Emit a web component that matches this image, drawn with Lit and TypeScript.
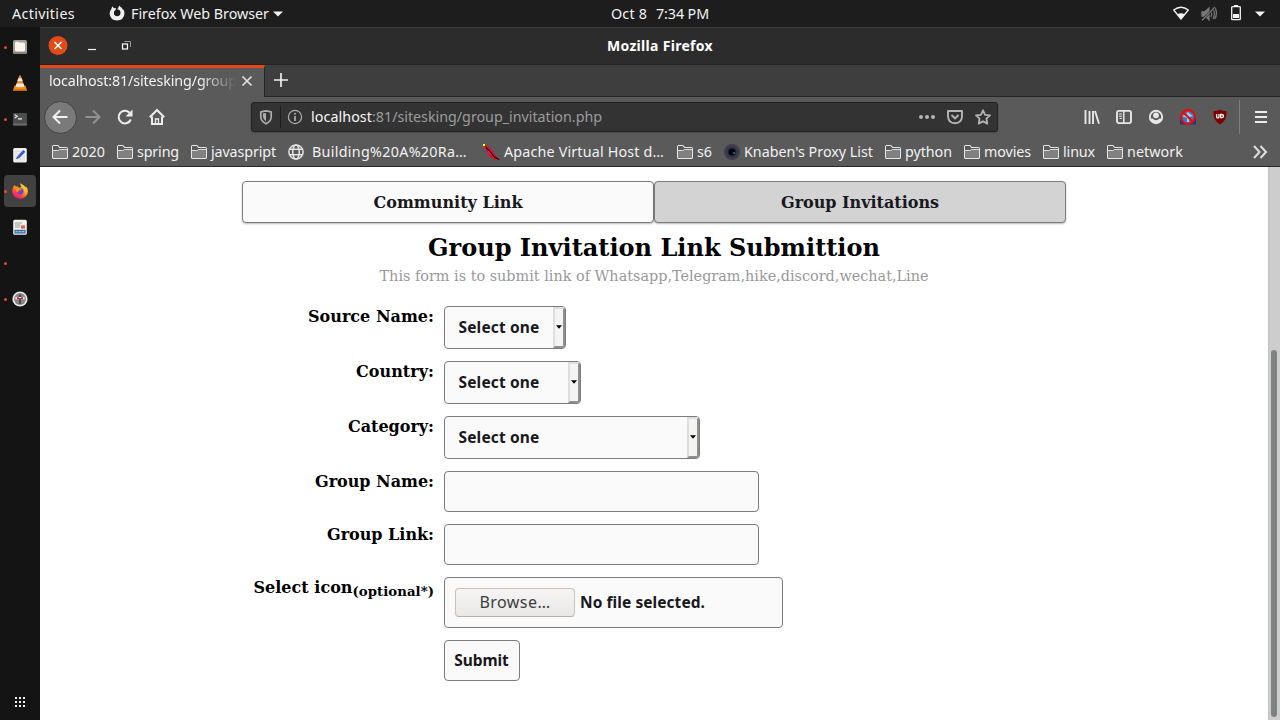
import { LitElement, html, css, svg, nothing } from "lit";
import { customElement, property } from "lit/decorators.js";

/** A single line of text whose tracking is adjusted so that it spans a given width. */
@customElement("fit-text")
class FitText extends LitElement {
  @property({ type: Number }) w = 0;
  @property() text = "";
  static styles = css`
    :host { display: inline-block; white-space: pre; flex: none; }
    span { display: inline-block; white-space: pre; }
  `;
  updated() {
    const el = this.renderRoot.querySelector("span") as HTMLElement;
    el.style.letterSpacing = "0px";
    const natural = el.getBoundingClientRect().width;
    const n = this.text.length;
    el.style.letterSpacing = `${(this.w - natural) / n}px`;
    this.style.width = `${this.w}px`;
  }
  render() {
    return html`<span>${this.text}</span>`;
  }
}

const fit = (text: string, w: number, cls = "") => html`<fit-text class=${cls} .text=${text} .w=${w}></fit-text>`;
const icon = (body: unknown, size = 16, cls = "") =>
  html`<svg class="ic ${cls}" width=${size} height=${size} viewBox="0 0 ${size} ${size}">${body}</svg>`;

const folder = svg`<path d="M.5 14V2.500q0-1 1-1h4.300q.5 0 .7.500l.8 1.500h7.200q1 0 1 1V14q0 .5-.5.500H1Q.5 14.500.5 14z" fill="#808080" stroke="#e6e6e6"/><path d="M1 2h5l.8 1.500H15v1.800H7L6 6H1z" fill="#5a5a5a"/><path d="M1 6.500h4.500q1 0 1.500-.5t1-.5h7" fill="none" stroke="#e6e6e6" stroke-width=".9"/><path d="M.5 4V2.500q0-1 1-1h4.300q.5 0 .7.500l.8 1.500h7.200q1 0 1 1" fill="none" stroke="#e6e6e6"/>`;
const globe = svg`<g fill="none" stroke="#e4e4e4" stroke-width="1.500"><circle cx="8" cy="8" r="7.100"/><ellipse cx="8" cy="8" rx="3.300" ry="7.100"/><path d="M1.500 5.300h13M1.500 10.700h13"/></g>`;
const feather = svg`<path d="M1 1q4.500 1 7 4t4.500 7l3.500 3-2.500 1Q8 14 5.500 10.500 3.500 7.500 1 1z" fill="#f00"/><path d="M3.500 4q4 1.500 8 8-4-.5-6-3.500z" fill="#d818e0"/><path d="M3 3.500L7 7.500l4.500 5.500 4.500 2.500" fill="none" stroke="#100018" stroke-width="1.200"/><path d="M0 0h2v2H0z" fill="#ff0"/>`;
const eye = svg`<circle cx="8" cy="8" r="8" fill="#3f3e4b"/><circle cx="8" cy="8" r="5.600" fill="#343345"/><circle cx="8" cy="8" r="3.600" fill="#02021c"/><circle cx="10" cy="9" r="1.100" fill="#128a5c"/>`;

const BOOKMARKS: [unknown, string, number, number, number][] = [
  [folder, "2020", 33, 4, 12], [folder, "spring", 42, 4, 12], [folder, "javaspript", 65, 4, 12],
  [globe, "Building%20A%20Ra…", 155, 8, 16], [feather, "Apache Virtual Host d…", 160, 5, 13],
  [folder, "s6", 15, 4, 12], [eye, "Knaben's Proxy List", 129, 4, 12], [folder, "python", 47, 4, 12],
  [folder, "movies", 47, 4, 12], [folder, "linux", 32, 4, 12], [folder, "network", 56, 4, 0],
];

const DOCK: { art: unknown; dot?: boolean; active?: boolean }[] = [
  { dot: true, art: svg`<rect x="1" y="1" width="14" height="14" rx="1.800" fill="#aaa192"/><path d="M1 13h14v.5q0 1.500-1.500 1.500h-11Q1 15 1 13.500z" fill="#8b8375"/><path d="M3 4q0-1.200 1.200-1.200h2.300l1 .8h4.300Q13 3.600 13 4.800v6.500q0 1.200-1.200 1.200H4.200Q3 12.500 3 11.300z" fill="#f6f5f2"/>` },
  { art: svg`<path d="M2.500 10.500h11L15 15.500H1z" fill="#f28a0a"/><path d="M1 14.500h14v1.200H1z" fill="#d96c00"/><path d="M7.200.5h1.600L12.500 12q-4.500 2.300-9 0z" fill="#f58410"/><path d="M6.300 3.200h3.400l1 3H5.300z" fill="#e8e8e8"/><path d="M4.500 8.600h7l.9 2.800q-4.400 1.800-8.800 0z" fill="#ececec"/>` },
  { dot: true, art: svg`<rect x="1" y="2" width="14" height="12.500" rx="1" fill="#4b4c4c"/><path d="M1 12.500h14v1q0 1-1 1H2q-1 0-1-1z" fill="#6a6a6a"/><path d="M2.700 3.700l2.500 1.600-2.500 1.600M6 7.800h4" fill="none" stroke="#f2f2f2" stroke-width="1.200"/>` },
  { art: svg`<rect x="1.200" y="1" width="13.600" height="14.500" rx="1.500" fill="#eeeeed"/><path d="M3 4.500h10M3 7h10M3 9.500h10M3 12h10" stroke="#d2d2d2" stroke-width=".7"/><path d="M5.300 9.500l6-6.500 2 1.800-6 6.300z" fill="#2b57d8"/><path d="M5.300 9.500l2 1.600-3.300 1z" fill="#153aa8"/>` },
  { dot: true, active: true, art: svg`<defs><linearGradient id="fx" x1=".85" y1=".05" x2=".25" y2=".95"><stop offset="0" stop-color="#ffe84a"/><stop offset=".4" stop-color="#ffae1e"/><stop offset=".7" stop-color="#ff4b38"/><stop offset="1" stop-color="#e31587"/></linearGradient></defs><path d="M8.500 0q-.8 2.200 1 3.500L8 5 5.500 4.500 5.800 3 4 3.700 2.500 2Q.2 5 .1 8.300A7.900 7.700 0 0 0 15.900 8Q16 5 13.600 3.200l.2 1.600Q12.600 2.500 11 2 9 1.200 8.500 0z" fill="url(#fx)"/><circle cx="8.200" cy="8.300" r="3.400" fill="#7542c8"/><path d="M3 4.500q2.500-1.200 4.800.6L9.500 6Q9 7.500 7.300 7.500 6 8 6.300 9.300 5 9.500 4 8z" fill="#ff8a16"/>` },
  { art: svg`<rect x="1.200" y=".7" width="13.600" height="15" rx="1.500" fill="#f0f0ef"/><path d="M3 4h7M3 6h5.500M3 8h5" stroke="#9c9c94"/><rect x="9" y="6.400" width="4" height="3.200" fill="#e5604a"/><rect x="2.400" y="10.800" width="11.200" height="3.800" fill="#3c6da4"/><path d="M3.500 12.700h2m1 0h2.300m1 0h2.500" stroke="#c8dcf0" stroke-width="1.100"/>` },
  { dot: true, art: nothing },
  { dot: true, art: svg`<circle cx="8" cy="8" r="7.600" fill="#e9e9e9"/><circle cx="8" cy="8" r="5.900" fill="#858585"/><path d="M8 3.500V13" stroke="#4d4d4d" stroke-width="2"/><path d="M3.500 7.200h9" stroke="#f3eaea" stroke-width="2.400"/><path d="M5 7.200h2m2 0h2" stroke="#e8102c" stroke-width="1.900"/><circle cx="8" cy="8" r="1" fill="#333"/>` },
];

@customElement("app-root")
class AppRoot extends LitElement {
  static styles = css`
    :host { display: flex; flex-direction: column; width: 1280px; height: 720px; overflow: hidden; background: #fff;
      font: 14.3px/20px "Noto Sans", sans-serif; color: #f2f2f2; }
    * { box-sizing: border-box; }
    .ic { display: block; flex: none; overflow: visible; }
    .row { display: flex; align-items: center; }
    .top { height: 27px; flex: none; background: #1d1d1d; padding: 0 14px 0 12px; }
    .side { width: 599px; flex: none; }
    .fx { margin: 0 6px 0 34px; }
    .caret { margin-left: 4px; }
    .clock { gap: 9px; }
    .tray { justify-content: flex-end; margin-left: auto; width: auto; padding-right: 1px; }
    .body { flex: 1; display: flex; min-height: 0; }
    .dock { width: 40px; flex: none; background: #141414; display: flex; flex-direction: column; padding: 4px 4px 13px; }
    .app { height: 32px; margin-bottom: 4px; display: flex; align-items: center; border-radius: 4px; }
    .app.on { background: #414141; }
    .app .ic { margin-left: 6px; }
    .dot { width: 3px; height: 3px; border-radius: 50%; background: #e2501f; margin-right: -1px; }
    .dot.off { background: none; }
    .grid { margin-top: auto; display: grid; grid-template-columns: repeat(3, 2px); gap: 2px; padding-left: 11px; }
    .grid i { width: 2px; height: 2px; background: #f0f0f0; }
    .win { flex: 1; display: flex; flex-direction: column; min-width: 0; }
    .title { height: 37px; flex: none; background: #2c2c2c; border-top: 1px solid #3b3b3b; padding: 0 0 1px 8px; }
    .title .min { margin-left: 16px; }
    .title .max { margin-left: 18px; }
    .name { margin-left: 473px; font-size: 14px; font-weight: 700; color: #fff; }
    .strip { height: 33px; flex: none; background: #3e3e3e; border-top: 1px solid #232323; border-bottom: 1px solid #252525; align-items: stretch; }
    .tab { width: 225px; background: #5a5a5a; border-top: 3px solid #e3481a; border-right: 1px solid #252525; margin-bottom: -1px; padding: 0 9px 3px; z-index: 1; }
    .cut { width: 188px; overflow: hidden; display: flex; -webkit-mask-image: linear-gradient(90deg, #000 80%, transparent 100%); }
    .tab .ic { margin-left: 3px; }
    .plus { align-self: center; margin: -1px 0 0 8px; }
    .nav { height: 40px; flex: none; background: #5a5a5a; padding-left: 4px; }
    .slot { width: 32px; display: flex; justify-content: center; flex: none; }
    .back { width: 33px; height: 33px; margin-right: 0; border-radius: 50%; background: #7a7a7a; border: 1px solid #434343; display: flex; align-items: center; justify-content: center; padding-right: 1px; }
    .url { width: 747px; height: 30px; margin: 0 78px; background: #333; border: 1px solid #212121; border-radius: 3px; color: #9c9c9c; padding-left: 6px; box-shadow: 0 1px 2px #4a4a4a; }
    .url .bar { width: 1px; height: 22px; background: #1f1f1f; margin: 0 6px; }
    .url .host { margin-left: 8px; color: #f8f8f8; }
    .acts { margin-left: auto; gap: 12px; padding-right: 6px; }
    .vr { width: 1px; height: 34px; background: #7d7d7d; margin: 0 5px 0 3px; }
    .marks { height: 30px; flex: none; background: #5a5a5a; border-bottom: 1px solid #272727; padding: 0 12px; }
    .more { margin-left: auto; }
    .view { flex: 1; display: flex; min-height: 0; }
    .page { flex: 1; background: #fff; color: #000; font-family: "DejaVu Serif", serif; font-size: 16px; display: flex; flex-direction: column; align-items: center; padding-top: 14px; }
    .scroll { width: 12px; background: #cdcdcd; border-left: 1px solid #c4bfb8; padding: 183px 0 3px 2px; }
    .thumb { width: 6px; height: 100%; border-radius: 3px; background: #7e8382; }
    .tabs { width: 824px; display: flex; height: 42px; }
    .seg { flex: 1; display: flex; align-items: center; justify-content: center; background: #fafafa; border: 1px solid #7c7c7c; border-radius: 4px; font-weight: 700; color: #181820; box-shadow: 0 1px 2px rgba(0,0,0,.28); padding-top: 2px; }
    .seg.on { background: #d3d3d3; }
    .h { font-weight: 700; font-size: 24px; line-height: 28px; margin-top: 11px; }
    .sub { font-size: 14.400px; line-height: 20px; color: #999; margin-top: 4px; }
    .form { width: 824px; margin-top: 20px; display: grid; grid-template-columns: 192px 1fr; column-gap: 10px; row-gap: 12px; justify-items: start; }
    .lab { justify-self: end; font-weight: 700; line-height: 20px; display: flex; padding-top: 1px; }
    .lab .opt { font-size: 13.300px; margin-top: 4px; }
    .box { border: 1px solid #7c7c7c; border-radius: 4px; background: #fafafa; display: flex; align-items: center; color: #181820; font: 700 15.500px/20px "Noto Sans", sans-serif; }
    .box fit-text { margin-bottom: 2px; }
    .sel { height: 43px; padding-left: 13.500px; overflow: hidden; }
    .drop { margin-left: auto; width: 12px; height: 41px; background: #f4f4f3; border: 2px solid #dedede; border-right-color: #8f8f8f; border-bottom-color: #8f8f8f; display: flex; align-items: center; justify-content: center; padding-bottom: 1px; }
    .input { width: 315px; height: 41px; }
    .file { width: 339px; height: 51px; padding-left: 10px; gap: 5px; }
    .browse { width: 120px; height: 29px; border: 1px solid #c8c2bb; border-bottom-color: #b9b1a8; border-radius: 4px; background: linear-gradient(#f6f5f4, #e9e8e6); display: flex; align-items: center; justify-content: center; font-size: 16px; font-weight: 400; color: #3a3d3f; }
    .submit { width: 76px; height: 41px; justify-content: center; padding-right: 1px; }
  `;

  select(label: string, lw: number, w: number) {
    return html`<div class="lab">${fit(label, lw)}</div>
      <div class="box sel" style="width:${w}px">${fit("Select one", 81)}
        <div class="drop"><svg class="ic" width="6" height="4" viewBox="0 0 6 4"><path d="M0 .2h6L3 3.700z" fill="#000"/></svg></div>
      </div>`;
  }

  render() {
    const tri = html`<svg class="ic caret" width="10" height="6" viewBox="0 0 10 6"><path d="M0 .5h10L5 5.500z" fill="#f2f2f2"/></svg>`;
    return html`
      <div class="top row">
        <div class="side row">
          ${fit("Activities", 63)}
          ${icon(svg`<path d="M3.200.2L5 2.200Q6.300 1.600 7 2.200L6.500 4 5 5.500v3Q6 10.300 8 10.300q3 0 3.500-3 .2-2.300-1.300-3.600L8.300 3.500 9.600 1 10.500-.5l1 1.500 1.500 1 .6 1.500 1 .3q1 2 .9 3.700-.5 6.700-7.500 7Q1 14 .6 7.500q0-2.500 1.700-4.200z" fill="#efefef"/>`, 16, "fx")}
          ${fit("Firefox Web Browser", 138)}${tri}
        </div>
        <div class="row clock">${fit("Oct 8", 36)}${fit("7:34 PM", 53)}</div>
        <div class="side row tray">
          <svg class="ic" width="92" height="18" viewBox="0 0 92 18">
            <path d="M.7 5Q8-.5 15.300 5L8 14z" fill="none" stroke="#f2f2f2" stroke-width="1.300"/><path d="M4.200 9.500Q8 7 11.800 9.500L8 14.500z" fill="#f2f2f2"/>
            <g fill="none" stroke="#777" stroke-width="1.300"><path d="M29 6.800h3L36 3v12l-4-4h-3z" fill="#777"/><path d="M38 6q1.500 3 0 6M40 4q3 5 0 10M42.300 3q2.500 6-.5 11"/><path d="M42 2L29 15.500" stroke="#1d1d1d" stroke-width="2.400"/><path d="M42 2L29 15.500"/></g>
            <path d="M61 0h4v2h-4z" fill="#f2f2f2"/><rect x="58.700" y="1.700" width="8.600" height="13" rx=".8" fill="none" stroke="#f2f2f2" stroke-width="1.300"/><path d="M60 9h6v4h-6z" fill="#f2f2f2"/>
            <path d="M82 6.500h10l-5 5z" fill="#f2f2f2"/>
          </svg>
        </div>
      </div>
      <div class="body">
        <div class="dock">
          ${DOCK.map((d) => html`<div class="app ${d.active ? "on" : ""}"><i class="dot ${d.dot ? "" : "off"}"></i>${icon(d.art)}</div>`)}
          <div class="grid">${Array.from({ length: 9 }, () => html`<i></i>`)}</div>
        </div>
        <div class="win">
          <div class="title row">
            ${icon(svg`<circle cx="10" cy="9.500" r="9.500" fill="#e34a18"/><path d="M6.500 6l7 7m0-7l-7 7" stroke="#fff" stroke-width="1.600"/>`, 20)}
            ${icon(svg`<path d="M4 11.500h8" stroke="#f2f2f2" stroke-width="1.200"/>`, 16, "min")}
            ${icon(svg`<rect x="4.500" y="6" width="5" height="5" fill="none" stroke="#fff" stroke-width="1.200"/><path d="M6.500 3.500h6V9" fill="none" stroke="#999"/>`, 16, "max")}
            ${fit("Mozilla Firefox", 106, "name")}
          </div>
          <div class="strip row">
            <div class="tab row"><div class="cut">${fit("localhost:81/sitesking/group", 188)}</div>
              ${icon(svg`<path d="M2.500 2.500l9 9m0-9l-9 9" stroke="#e0e0e0" stroke-width="1.700"/>`, 14)}</div>
            ${icon(svg`<path d="M8 1v14M1 8h14" stroke="#efefef" stroke-width="1.700"/>`, 16, "plus")}
          </div>
          <div class="nav row">
            <div class="back">${icon(svg`<path d="M15.500 8H1.500M8 1.500L1.500 8 8 14.500" fill="none" stroke="#f0f0f0" stroke-width="2"/>`)}</div>
            <div class="slot">${icon(svg`<path d="M.5 8h14M8 1.500L14.500 8 8 14.500" fill="none" stroke="#919191" stroke-width="2"/>`)}</div>
            <div class="slot">${icon(svg`<path d="M13.800 10.500A6.300 6.300 0 1 1 12.500 3.700" fill="none" stroke="#ececec" stroke-width="2"/><path d="M15.500.500v7h-7z" fill="#ececec"/>`)}</div>
            <div class="slot">${icon(svg`<path d="M.8 8.200L8 1l7.200 7.200" fill="none" stroke="#ececec" stroke-width="2"/><path d="M3 7.500V15h10V7.500" fill="none" stroke="#ececec" stroke-width="2"/><path d="M6.500 15v-5h3v5" fill="none" stroke="#ececec" stroke-width="1.300"/>`)}</div>
            <div class="url row">
              ${icon(svg`<path d="M8 1.800Q11 2 13.200 3v4.500q0 5-5.200 7.300Q2.800 12.500 2.800 7.500V3Q5 2 8 1.800z" fill="none" stroke="#adadad" stroke-width="1.700"/><path d="M8 4q-2 .1-3.100.6v3Q5 10.500 8 12.400z" fill="#adadad"/>`)}
              <div class="bar"></div>
              ${icon(svg`<circle cx="8" cy="8" r="6.600" fill="none" stroke="#adadad" stroke-width="1.200"/><path d="M8 7v5" stroke="#adadad" stroke-width="1.700"/><circle cx="8" cy="4.800" r="1" fill="#adadad"/>`)}
              ${fit("localhost", 61, "host")}${fit(":81/sitesking/group_invitation.php", 230)}
              <div class="acts row">
                ${icon(svg`<g fill="#b5b5b5"><circle cx="2" cy="8" r="2"/><circle cx="8" cy="8" r="2"/><circle cx="14" cy="8" r="2"/></g>`)}
                ${icon(svg`<path d="M1 2h14v5.500q-.4 6.500-7 6.800-6.600-.3-7-6.800z" fill="none" stroke="#b5b5b5" stroke-width="1.900" stroke-linejoin="round"/><path d="M4.500 6L8 9.400 11.500 6" fill="none" stroke="#b5b5b5" stroke-width="2"/>`)}
                ${icon(svg`<path d="M8 1.300l2.100 4.500 4.900.6-3.600 3.300.9 4.900L8 12.200l-4.300 2.400.9-4.900L1 6.400l4.900-.6z" fill="none" stroke="#b5b5b5" stroke-width="1.800" stroke-linejoin="round"/>`)}
              </div>
            </div>
            <div class="slot">${icon(svg`<path d="M1.500 1v14M5.500 2v13M9 2v13M11 2l4 12.700" fill="none" stroke="#e6e6e6" stroke-width="1.900"/>`)}</div>
            <div class="slot">${icon(svg`<rect x="1" y="1.900" width="14" height="12.200" rx="1.800" fill="none" stroke="#e6e6e6" stroke-width="1.900"/><path d="M7.800 2v12" stroke="#e6e6e6" stroke-width="1.500"/><path d="M3 5h3M3 7.200h3M3.500 9.400H6" stroke="#e6e6e6"/>`)}</div>
            <div class="slot">${icon(svg`<circle cx="8" cy="8" r="6.200" fill="none" stroke="#e6e6e6" stroke-width="1.900"/><circle cx="8" cy="6.300" r="2.900" fill="#e6e6e6"/><path d="M2.500 9.500h2Q8 13 11.500 9.500h2Q12.500 14 8 14.300 3.500 14 2.500 9.500z" fill="#e6e6e6"/>`)}</div>
            <div class="slot">${icon(svg`<path d="M0 7h16v8.500H0z" fill="#1d3c70"/><circle cx="8" cy="8" r="7" fill="#2e7cc4"/><path d="M2 7l3-1 3-3 2 2 3 2-4 1v5H7v-4z" fill="#a6c9e4"/><g fill="none" stroke="#f00808" stroke-width="2.100"><circle cx="8" cy="8" r="6.900"/><path d="M3 3l10 10"/></g>`)}</div>
            <div class="slot"><svg class="ic" width="16" height="16" viewBox="0 0 16 16"><path d="M8 .5q3 1.800 6.500 1.800 1 9-6.500 13.200Q.5 11.300 1.500 2.300 5 2.300 8 .500z" fill="#800000"/><path d="M4.600 5v2.500q0 1.500 1.200 1.500T7 7.500V5" fill="none" stroke="#fff" stroke-width="1.300"/><path d="M8.700 5.500h1q1.800 0 1.800 1.600T9.700 8.700h-1z" fill="none" stroke="#fff" stroke-width="1.300"/></svg></div>
            <div class="vr"></div>
            <div class="slot">${icon(svg`<path d="M2 3h12M2 8h12M2 13h12" stroke="#ececec" stroke-width="2"/>`)}</div>
          </div>
          <div class="marks row">
            ${BOOKMARKS.map(([art, t, w, g, after]) => html`${icon(art)}<div style="margin:0 ${after}px 0 ${g}px;display:flex">${fit(t, w)}</div>`)}
            ${icon(svg`<path d="M2 2l5.500 6L2 14M8.500 2l5.500 6-5.500 6" fill="none" stroke="#dedede" stroke-width="2"/>`, 16, "more")}
          </div>
          <div class="view">
            <div class="page">
              <div class="tabs"><div class="seg">${fit("Community Link", 149)}</div><div class="seg on">${fit("Group Invitations", 158)}</div></div>
              <div class="h">${fit("Group Invitation Link Submittion", 452)}</div>
              <div class="sub">${fit("This form is to submit link of Whatsapp,Telegram,hike,discord,wechat,Line", 549)}</div>
              <div class="form">
                ${this.select("Source Name:", 126, 122)}
                ${this.select("Country:", 78, 137)}
                ${this.select("Category:", 86, 256)}
                <div class="lab">${fit("Group Name:", 119)}</div><div class="box input"></div>
                <div class="lab">${fit("Group Link:", 107)}</div><div class="box input"></div>
                <div class="lab">${fit("Select icon", 99)}${fit("(optional*)", 81.5, "opt")}</div>
                <div class="box file"><div class="browse">${fit("Browse…", 71)}</div>${fit("No file selected.", 125)}</div>
                <div></div><div class="box submit">${fit("Submit", 54.5)}</div>
              </div>
            </div>
            <div class="scroll"><div class="thumb"></div></div>
          </div>
        </div>
      </div>`;
  }
}
